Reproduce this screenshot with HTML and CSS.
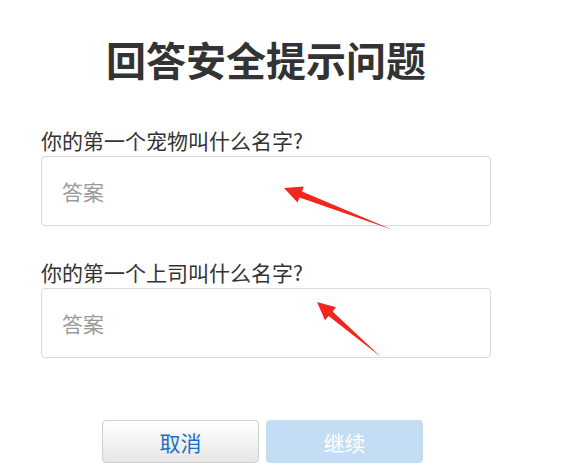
FILE: index.html
```html
<!DOCTYPE html>
<html lang="zh-CN">
<head>
<meta charset="utf-8">
<title>回答安全提示问题</title>
<link rel="stylesheet" href="styles.css">
</head>
<body>
<main class="page">
  <h1 class="title">回答安全提示问题</h1>
  <form class="form">
    <label class="field">
      <span class="label">你的第一个宠物叫什么名字?</span>
      <input class="answer" type="text" placeholder="答案">
    </label>
    <label class="field">
      <span class="label">你的第一个上司叫什么名字?</span>
      <input class="answer" type="text" placeholder="答案">
    </label>
    <div class="actions">
      <button type="button" class="btn btn-cancel">取消</button>
      <button type="button" class="btn btn-continue">继续</button>
    </div>
  </form>
</main>
<svg class="annotations" width="583" height="467" viewBox="0 0 583 467" aria-hidden="true">
  <polygon points="284,188 303.7,186.5 302,191.5 393,230 299.5,197.5 297.5,202.5" fill="#f2261c"/>
  <polygon points="317,302 336,307.2 332.6,311.4 381,357 328.6,316 325,320.2" fill="#f2261c"/>
</svg>
</body>
</html>
```
FILE: styles.css
```css
html, body {
  margin: 0;
  padding: 0;
  background: #ffffff;
}

body {
  font-family: "Noto Sans CJK SC", "Noto Sans", sans-serif;
  color: #333333;
}

.page {
  width: 450px;
  margin-left: 41px;
  padding-top: 35px;
  display: flex;
  flex-direction: column;
}

.title {
  margin: 0;
  font-size: 40px;
  line-height: 48px;
  font-weight: 700;
  text-align: center;
  color: #333333;
}

.form {
  display: flex;
  flex-direction: column;
  margin-top: 44px;
}

.field {
  display: flex;
  flex-direction: column;
  gap: 3px;
}

.field + .field {
  margin-top: 33px;
}

.label {
  font-size: 21px;
  line-height: 26px;
  color: #333333;
}

.answer {
  box-sizing: border-box;
  width: 450px;
  height: 70px;
  margin: 0;
  padding: 0 20px;
  border: 1px solid #d9d9d9;
  border-radius: 4px;
  font-family: inherit;
  font-size: 21px;
  color: #333333;
  background: #ffffff;
  outline: none;
}

.answer::placeholder {
  color: #9a9a9a;
}

.actions {
  display: flex;
  gap: 7px;
  margin-top: 62px;
  margin-left: 61px;
}

.btn {
  box-sizing: border-box;
  width: 157px;
  height: 43px;
  margin: 0;
  padding: 0;
  border-radius: 4px;
  font-family: inherit;
  font-size: 21px;
  cursor: pointer;
}

.btn-cancel {
  border: 1px solid #cfcfcf;
  background: linear-gradient(#ffffff, #e6e6e6);
  color: #1b6fc4;
}

.btn-continue {
  border: 1px solid #c2dcf3;
  background: #c3ddf4;
  color: #ffffff;
}

.annotations {
  position: absolute;
  left: 0;
  top: 0;
  pointer-events: none;
}
```
